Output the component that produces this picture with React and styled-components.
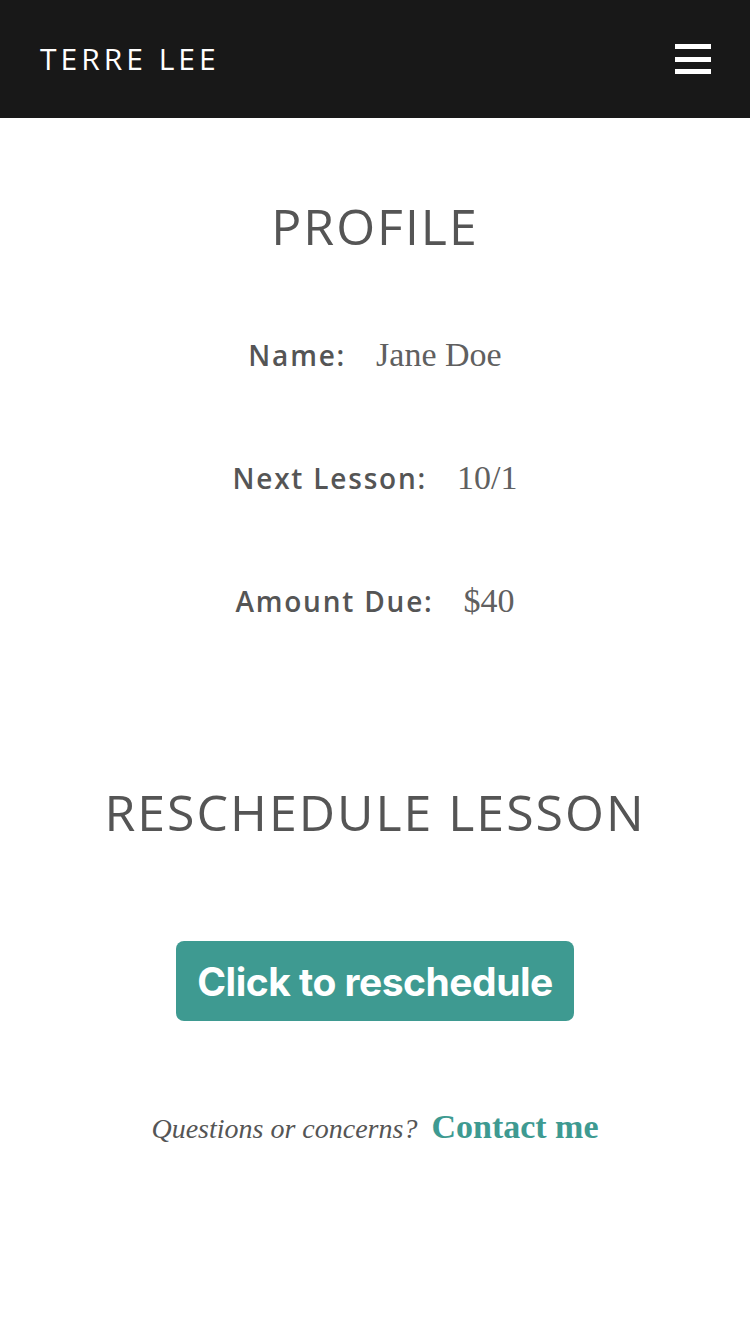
import styled, { createGlobalStyle } from "styled-components";

const GlobalStyle = createGlobalStyle`
  body {
    margin: 0;
    background: #fff;
    font-family: "Open Sans", "Noto Sans", sans-serif;
  }
`;

const Header = styled.header`
  height: 118px;
  background: #181818;
  display: flex;
  align-items: center;
  justify-content: space-between;
  padding: 0 39px 0 40px;
  box-sizing: border-box;
`;

const Brand = styled.div`
  color: #fff;
  font-family: "Open Sans", sans-serif;
  font-size: 30px;
  letter-spacing: 4px;
  line-height: 1;
`;

const Burger = styled.button`
  background: none;
  border: none;
  padding: 0;
  width: 36px;
  height: 30px;
  display: flex;
  flex-direction: column;
  justify-content: space-between;
  span {
    display: block;
    height: 5px;
    background: #fff;
  }
`;

const Main = styled.main`
  display: flex;
  flex-direction: column;
  align-items: center;
  color: #555;
`;

const Heading = styled.h2`
  margin: ${(p) => p.$top}px 0 0;
  font-family: "Open Sans", sans-serif;
  font-weight: 400;
  font-size: 50px;
  letter-spacing: 2px;
  line-height: 1;
`;

const Rows = styled.div`
  display: flex;
  flex-direction: column;
  align-items: center;
  gap: 89px;
  margin-top: 87px;
`;

const Row = styled.div`
  display: flex;
  align-items: baseline;
  gap: 30px;
  line-height: 1;
`;

const Label = styled.span`
  font-family: "Open Sans", sans-serif;
  font-weight: 600;
  font-size: 28px;
  letter-spacing: 1.8px;
`;

const Value = styled.span`
  font-family: "Liberation Serif", serif;
  font-size: 34px;
  color: #606060;
`;

const Button = styled.button`
  margin-top: 104px;
  width: 398px;
  height: 80px;
  border: none;
  border-radius: 8px;
  background: #3e9a91;
  color: #fff;
  font-family: Inter, sans-serif;
  font-weight: 700;
  font-size: 39px;
  letter-spacing: -0.5px;
`;

const Contact = styled.p`
  margin: 89px 0 0;
  display: flex;
  align-items: baseline;
  gap: 14px;
  font-family: "Liberation Serif", serif;
  line-height: 1;
`;

const Question = styled.em`
  font-size: 28px;
  color: #555;
`;

const Link = styled.a`
  font-size: 34px;
  font-weight: 600;
  color: #3e9a91;
  text-decoration: none;
`;

const profile = [
  { label: "Name:", value: "Jane Doe" },
  { label: "Next Lesson:", value: "10/1" },
  { label: "Amount Due:", value: "$40" },
];

export default function App() {
  return (
    <>
      <GlobalStyle />
      <Header>
        <Brand>TERRE LEE</Brand>
        <Burger aria-label="menu">
          <span />
          <span />
          <span />
        </Burger>
      </Header>
      <Main>
        <Heading $top={83}>PROFILE</Heading>
        <Rows>
          {profile.map((row) => (
            <Row key={row.label}>
              <Label>{row.label}</Label>
              <Value>{row.value}</Value>
            </Row>
          ))}
        </Rows>
        <Heading $top={169}>RESCHEDULE LESSON</Heading>
        <Button>Click to reschedule</Button>
        <Contact>
          <Question>Questions or concerns?</Question>
          <Link href="#">Contact me</Link>
        </Contact>
      </Main>
    </>
  );
}
